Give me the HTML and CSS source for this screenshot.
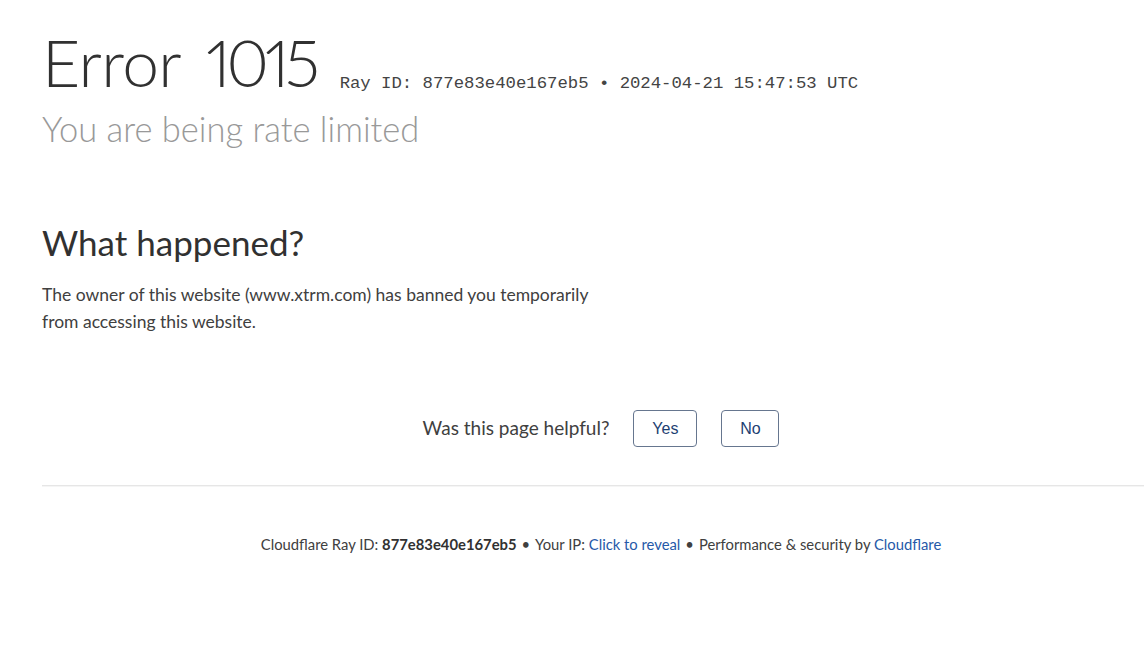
FILE: index.html
```html
<!DOCTYPE html>
<html lang="en">
<head>
<meta charset="utf-8">
<title>Access denied | www.xtrm.com used Cloudflare to restrict access</title>
<link rel="stylesheet" href="styles.css">
</head>
<body>
<div class="wrapper">
  <header class="overview">
    <h1 class="error-title">
      <span class="error-type">Error</span>
      <span class="error-code">1015</span>
      <small class="ray-id">Ray ID: 877e83e40e167eb5 &bull; 2024-04-21 15:47:53 UTC</small>
    </h1>
    <h2 class="subheadline">You are being rate limited</h2>
  </header>

  <section class="details">
    <h2 class="details-title">What happened?</h2>
    <p class="details-text">The owner of this website (www.xtrm.com) has banned you temporarily<br>from accessing this website.</p>
  </section>

  <div class="feedback">
    <span class="feedback-question">Was this page helpful?</span>
    <button class="feedback-btn" type="button">Yes</button>
    <button class="feedback-btn" type="button">No</button>
  </div>

  <footer class="footer">
    <span>Cloudflare Ray ID: <strong>877e83e40e167eb5</strong></span>
    <span class="sep">&bull;</span>
    <span>Your IP: <a href="#" class="link">Click to reveal</a></span>
    <span class="sep">&bull;</span>
    <span>Performance &amp; security by <a href="#" class="link">Cloudflare</a></span>
  </footer>
</div>
</body>
</html>
```

FILE: styles.css
```css
html, body {
  margin: 0;
  padding: 0;
  background: #fff;
  overflow: hidden;
}

body {
  font-family: "Lato", "Open Sans", "Liberation Sans", sans-serif;
  color: #404040;
}

.wrapper {
  width: 1118px;
  padding: 22px 0 0 42px;
}

/* Heading block */
.error-title {
  display: flex;
  align-items: baseline;
  margin: 0;
  font-weight: 300;
  font-size: 66px;
  line-height: 80px;
  color: #313131;
}

.error-type {
  letter-spacing: -0.6px;
}

.error-code {
  margin-left: 25px;
  letter-spacing: -4.6px;
  font-variant-numeric: proportional-nums;
}

.ray-id {
  margin-left: 24px;
  font-family: "Liberation Mono", "Courier New", monospace;
  font-size: 17.3px;
  line-height: 20px;
  font-weight: 400;
  color: #444;
  position: relative;
  top: 1px;
}

.subheadline {
  margin: 6px 0 0;
  font-weight: 300;
  font-size: 34.5px;
  line-height: 42px;
  color: #999;
}

/* What happened */
.details {
  margin-top: 71px;
}

.details-title {
  margin: 0;
  font-weight: 400;
  font-size: 35px;
  line-height: 42px;
  color: #313131;
}

.details-text {
  margin: 18px 0 0;
  font-size: 17.5px;
  line-height: 27px;
  color: #404040;
}

/* Feedback */
.feedback {
  display: flex;
  justify-content: center;
  align-items: center;
  gap: 24px;
  margin-top: 75px;
  padding-bottom: 38px;
  border-bottom: 1px solid #e6e6e6;
  box-shadow: 0 1px 0 #f5f5f5;
}

.feedback-question {
  font-size: 19px;
  padding-bottom: 3px;
  color: #404040;
}

.feedback-btn {
  box-sizing: border-box;
  font-family: "Liberation Sans", Arial, sans-serif;
  font-size: 16px;
  color: #1e3f72;
  background: #fff;
  border: 1px solid #66768f;
  border-radius: 4px;
  height: 37px;
  width: 58px;
  padding: 0;
  cursor: pointer;
}

.feedback-btn:first-of-type {
  width: 64px;
}

/* Footer */
.footer {
  display: flex;
  justify-content: center;
  gap: 5px;
  margin-top: 48px;
  font-size: 14.8px;
  line-height: 20px;
  color: #404040;
}

.footer strong {
  font-weight: 700;
  color: #313131;
}

.link {
  color: #2659a8;
  text-decoration: none;
}
```
